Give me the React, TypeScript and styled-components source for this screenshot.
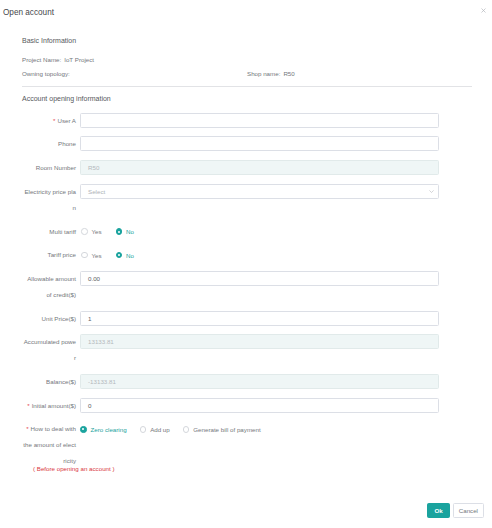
import React from "react";
import styled, { createGlobalStyle } from "styled-components";

const teal = "#1aa39e";
const labelGrey = "#74777c";
const darkText = "#45474b";
const borderGrey = "#dcdfe6";

const GlobalStyle = createGlobalStyle`
  html, body {
    margin: 0;
    padding: 0;
    background: #fff;
  }
  body {
    font-family: "Liberation Sans", Arial, sans-serif;
    -webkit-font-smoothing: antialiased;
  }
`;

type FieldProps = {
  label: string[];
  required?: boolean;
  hint?: string;
  children: React.ReactNode;
};

const Field: React.FC<FieldProps> = ({ label, required, hint, children }) => (
  <Row>
    <Label>
      {label.map((line, i) => (
        <LabelLine key={i}>
          {i === 0 && required && <Star>*</Star>}
          {line}
        </LabelLine>
      ))}
      {hint && <Hint>{hint}</Hint>}
    </Label>
    <Control>{children}</Control>
  </Row>
);

type RadioProps = { checked?: boolean; children: React.ReactNode };

const Radio: React.FC<RadioProps> = ({ checked, children }) => (
  <RadioItem>
    <RadioDot checked={checked} />
    <RadioText checked={checked}>{children}</RadioText>
  </RadioItem>
);

export default function App() {
  return (
    <>
      <GlobalStyle />
      <Dialog>
        <Header>
          <Title>Open account</Title>
          <CloseButton aria-label="close">
            <svg width="5" height="5" viewBox="0 0 5 5">
              <path d="M0.5 0.5 L4.5 4.5 M4.5 0.5 L0.5 4.5" stroke="#b5b8bd" strokeWidth="0.7" />
            </svg>
          </CloseButton>
        </Header>

        <Body>
          <SectionTitle>Basic Information</SectionTitle>
          <InfoGrid>
            <InfoItem>
              Project Name:<InfoValue>IoT Project</InfoValue>
            </InfoItem>
            <InfoItem />
            <InfoItem>Owning topology:</InfoItem>
            <InfoItem>
              Shop name:<InfoValue>R50</InfoValue>
            </InfoItem>
          </InfoGrid>
          <Divider />

          <SectionTitle spaced>Account opening information</SectionTitle>

          <Form>
            <Field label={["User A"]} required>
              <Input />
            </Field>
            <Field label={["Phone"]}>
              <Input />
            </Field>
            <Field label={["Room Number"]}>
              <Input disabled>R50</Input>
            </Field>
            <Field label={["Electricity price pla", "n"]}>
              <Input placeholder>
                Select
                <Chevron width="5" height="3" viewBox="0 0 5 3">
                  <path d="M0.4 0.4 L2.5 2.5 L4.6 0.4" fill="none" stroke="#b8bbc0" strokeWidth="0.6" />
                </Chevron>
              </Input>
            </Field>
            <Field label={["Multi tariff"]}>
              <RadioGroup>
                <Radio>Yes</Radio>
                <Radio checked>No</Radio>
              </RadioGroup>
            </Field>
            <Field label={["Tariff price"]}>
              <RadioGroup>
                <Radio>Yes</Radio>
                <Radio checked>No</Radio>
              </RadioGroup>
            </Field>
            <Field label={["Allowable amount", "of credit($)"]}>
              <Input filled>0.00</Input>
            </Field>
            <Field label={["Unit Price($)"]}>
              <Input filled>1</Input>
            </Field>
            <Field label={["Accumulated powe", "r"]}>
              <Input disabled>13133.81</Input>
            </Field>
            <Field label={["Balance($)"]}>
              <Input disabled>-13133.81</Input>
            </Field>
            <Field label={["Initial amount($)"]} required>
              <Input filled>0</Input>
            </Field>
            <Field
              label={["How to deal with", "the amount of elect", "ricity"]}
              required
              hint="( Before opening an account )"
            >
              <RadioGroup wide>
                <Radio checked>Zero clearing</Radio>
                <Radio>Add up</Radio>
                <Radio>Generate bill of payment</Radio>
              </RadioGroup>
            </Field>
          </Form>
        </Body>

        <Footer>
          <Button primary>Ok</Button>
          <Button>Cancel</Button>
        </Footer>
      </Dialog>
    </>
  );
}

const Dialog = styled.div`
  width: 492px;
  height: 528px;
  display: flex;
  flex-direction: column;
  box-sizing: border-box;
`;

const Header = styled.div`
  height: 25px;
  display: flex;
  align-items: center;
  justify-content: space-between;
  padding: 0 6px 0 3px;
`;

const Title = styled.div`
  font-size: 8.2px;
  line-height: 25px;
  color: ${darkText};
`;

const CloseButton = styled.div`
  display: flex;
  align-self: flex-start;
  margin-top: 7.5px;
`;

const Body = styled.div`
  padding: 0 20px 0 22px;
`;

const SectionTitle = styled.div<{ spaced?: boolean }>`
  font-size: 7px;
  line-height: 12px;
  color: #55585c;
  margin-top: ${({ spaced }) => (spaced ? "6px" : "10px")};
`;

const InfoGrid = styled.div`
  display: grid;
  grid-template-columns: 1fr 1fr;
  margin-top: 5.75px;
`;

const InfoItem = styled.div`
  font-size: 6.2px;
  line-height: 14.5px;
  color: ${labelGrey};
  min-height: 14.5px;
`;

const InfoValue = styled.span`
  margin-left: 3px;
`;

const Divider = styled.div`
  height: 1px;
  background: #e2e3e6;
  margin-top: 4.5px;
`;

const Form = styled.div`
  margin-top: 7.5px;
  padding-right: 33px;
`;

const Row = styled.div`
  display: flex;
  align-items: flex-start;
  margin-bottom: 7.7px;
`;

const Label = styled.div`
  width: 54px;
  flex: none;
  padding-right: 4px;
  text-align: right;
  font-size: 6.2px;
  line-height: 16px;
  color: ${labelGrey};
`;

const LabelLine = styled.div`
  white-space: nowrap;
`;

const Star = styled.span`
  color: #e5484d;
  margin-right: 2px;
`;

const Hint = styled.div`
  white-space: nowrap;
  text-align: left;
  color: #d9363e;
  line-height: 10px;
  margin: -5px 0 0 11px;
`;

const Control = styled.div`
  flex: 1;
  min-width: 0;
  height: 16px;
  display: flex;
  align-items: flex-start;
`;

const Input = styled.div<{ disabled?: boolean; placeholder?: boolean; filled?: boolean }>`
  position: relative;
  width: 100%;
  height: 15px;
  box-sizing: border-box;
  border: 1px solid ${({ disabled }) => (disabled ? "#e1eaea" : borderGrey)};
  border-radius: 1.5px;
  background: ${({ disabled }) => (disabled ? "#eff6f6" : "#fff")};
  padding-left: 7px;
  font-size: 6.2px;
  line-height: 13px;
  color: ${({ disabled, placeholder }) =>
    disabled ? "#b4b8bc" : placeholder ? "#aeb1b6" : "#5e6165"};
`;

const Chevron = styled.svg`
  position: absolute;
  right: 4px;
  top: 5px;
`;

const RadioGroup = styled.div<{ wide?: boolean }>`
  display: flex;
  align-items: center;
  height: 16px;
  gap: ${({ wide }) => (wide ? "13px" : "14px")};
  padding-left: ${({ wide }) => (wide ? "0" : "1px")};
`;

const RadioItem = styled.div`
  display: flex;
  align-items: center;
  gap: 4px;
`;

const RadioDot = styled.span<{ checked?: boolean }>`
  position: relative;
  width: 6.5px;
  height: 6.5px;
  box-sizing: border-box;
  border-radius: 50%;
  border: 1px solid ${({ checked }) => (checked ? teal : "#d4d7dc")};
  background: ${({ checked }) => (checked ? teal : "#fff")};

  &::after {
    content: "";
    display: ${({ checked }) => (checked ? "block" : "none")};
    position: absolute;
    left: 1.25px;
    top: 1.25px;
    width: 2px;
    height: 2px;
    border-radius: 50%;
    background: #fff;
  }
`;

const RadioText = styled.span<{ checked?: boolean }>`
  font-size: 6.2px;
  color: ${({ checked }) => (checked ? teal : labelGrey)};
`;

const Footer = styled.div`
  display: flex;
  justify-content: flex-end;
  gap: 3px;
  padding: 0 8px 0 0;
  margin-top: auto;
  margin-bottom: 10px;
`;

const Button = styled.div<{ primary?: boolean }>`
  height: 15px;
  box-sizing: border-box;
  padding: 0 ${({ primary }) => (primary ? "6px" : "5px")};
  min-width: ${({ primary }) => (primary ? "20px" : "29px")};
  display: flex;
  align-items: center;
  justify-content: center;
  border-radius: 1.5px;
  font-size: 6.2px;
  font-weight: ${({ primary }) => (primary ? 700 : 400)};
  color: ${({ primary }) => (primary ? "#fff" : labelGrey)};
  background: ${({ primary }) => (primary ? teal : "#fff")};
  border: 1px solid ${({ primary }) => (primary ? teal : borderGrey)};
`;
